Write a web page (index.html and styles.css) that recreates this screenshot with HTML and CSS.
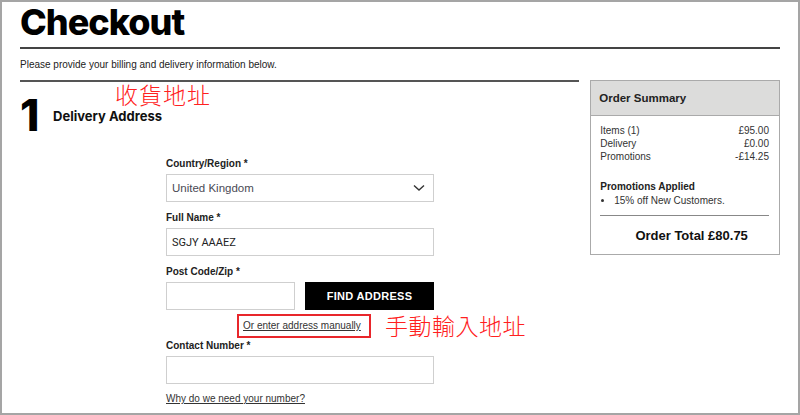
FILE: index.html
```html
<!DOCTYPE html>
<html lang="en">
<head>
  <meta charset="UTF-8">
  <title>Checkout</title>
  <link rel="stylesheet" href="styles.css">
</head>
<body>
  <div class="page">
    <h1>Checkout</h1>
    <p class="intro">Please provide your billing and delivery information below.</p>

    <div class="main">
      <div class="left">
        <div class="step">
          <span class="step-num">1</span>
          <span class="step-title">Delivery Address</span>
          <span class="note note-step">收貨地址</span>
        </div>

        <form class="address-form">
          <label>Country/Region *</label>
          <div class="select">
            <span>United Kingdom</span>
            <svg width="12" height="8" viewBox="0 0 12 8"><path d="M1 1.5 L6 6 L11 1.5" fill="none" stroke="#333" stroke-width="1.4"/></svg>
          </div>

          <label>Full Name *</label>
          <div class="input name-input">SGJY AAAEZ</div>

          <label>Post Code/Zip *</label>
          <div class="postcode-row">
            <div class="input postcode"></div>
            <button type="button" class="find-btn">FIND ADDRESS</button>
          </div>
          <div class="manual-row">
            <a href="#" class="manual-link">Or enter address manually</a>
            <span class="note note-manual">手動輸入地址</span>
          </div>

          <label>Contact Number *</label>
          <div class="input"></div>
          <a href="#" class="why-link">Why do we need your number?</a>
        </form>
      </div>

      <aside class="summary">
        <div class="summary-head">Order Summary</div>
        <div class="summary-body">
          <div class="row"><span>Items (1)</span><span>£95.00</span></div>
          <div class="row"><span>Delivery</span><span>£0.00</span></div>
          <div class="row"><span>Promotions</span><span>-£14.25</span></div>
          <div class="promo-title">Promotions Applied</div>
          <ul class="promo-list">
            <li>15% off New Customers.</li>
          </ul>
          <div class="total">Order Total £80.75</div>
        </div>
      </aside>
    </div>
  </div>
</body>
</html>
```

FILE: styles.css
```css
html, body {
  margin: 0;
  height: 415px;
}
body {
  font-family: 'Liberation Sans', Arial, sans-serif;
  color: #222;
  background: white;
  border: 2px solid #a5a5a5;
  box-sizing: border-box;
  overflow: hidden;
}
.page {
  padding: 0 18px;
}
h1 {
  font-family: 'Inter', sans-serif;
  font-weight: 800;
  font-size: 36px;
  line-height: 40px;
  margin: 0;
  padding-bottom: 5px;
  border-bottom: 2px solid #444;
  color: #000;
  letter-spacing: -1px;
}
.intro {
  font-size: 10px;
  line-height: 12px;
  margin: 10px 0 9px;
  color: #222;
}
.main {
  display: flex;
  gap: 11px;
}
.left {
  width: 560px;
  border-top: 2px solid #555;
}
.step {
  position: relative;
  display: flex;
  align-items: center;
  height: 62px;
}
.step-num {
  font-family: 'Inter', sans-serif;
  font-weight: 800;
  font-size: 44px;
  color: #000;
  width: 33px;
  margin-top: 4px;
}
.step-title {
  font-family: 'Inter', sans-serif;
  font-weight: 700;
  font-size: 13px;
  color: #111;
  margin-top: 6px;
}
.note {
  position: absolute;
  font-family: 'Noto Sans CJK TC', sans-serif;
  font-weight: 300;
  color: #ff2020;
  font-size: 23px;
  line-height: 26px;
  letter-spacing: 1px;
  white-space: nowrap;
}
.note-step {
  left: 95px;
  top: -1px;
}
.address-form {
  margin-left: 146px;
  width: 268px;
  font-size: 10px;
}
.address-form label {
  display: block;
  font-weight: bold;
  font-size: 10px;
  line-height: 12px;
  margin: 10px 0 4px;
}
.address-form label:first-child {
  margin-top: 14px;
}
.select, .input {
  box-sizing: border-box;
  height: 28px;
  border: 1px solid #cfcfcf;
  background: white;
  display: flex;
  align-items: center;
  padding: 0 5px;
  font-size: 11.5px;
}
.select {
  justify-content: space-between;
  color: #4a4a55;
  padding-right: 8px;
}
.name-input {
  font-family: 'Roboto', sans-serif;
  font-size: 11px;
  color: #222;
}
.postcode-row {
  display: flex;
  justify-content: space-between;
  margin-top: 1px;
}
.postcode {
  width: 129px;
}
.find-btn {
  width: 129px;
  height: 28px;
  background: #000;
  color: white;
  border: none;
  font-family: 'Liberation Sans', Arial, sans-serif;
  font-weight: bold;
  font-size: 11px;
  letter-spacing: 0.3px;
}
.manual-row {
  position: relative;
  padding: 4px 0 0 71px;
  height: 30px;
  box-sizing: border-box;
}
.manual-link {
  display: inline-block;
  border: 2px solid #e8262b;
  padding: 4px 8px 4px 4px;
  line-height: 12px;
  color: #333;
  font-size: 10px;
}
.note-manual {
  left: 219px;
  top: 2px;
  letter-spacing: 0.5px;
}
.address-form .manual-row + label {
  margin-top: 0;
}
.why-link {
  display: inline-block;
  margin-top: 9px;
  color: #333;
  font-size: 10px;
}
.summary {
  width: 190px;
  height: 175px;
  box-sizing: border-box;
  border: 1px solid #aaa;
  align-self: flex-start;
}
.summary-head {
  background: #dcdcdb;
  border-bottom: 1px solid #aaa;
  height: 34px;
  line-height: 35px;
  padding-left: 8px;
  font-weight: bold;
  font-size: 11.5px;
  color: #222;
}
.summary-body {
  padding: 8px 10px 0 9px;
  font-size: 10px;
  color: #333;
}
.row {
  display: flex;
  justify-content: space-between;
  line-height: 13px;
}
.promo-title {
  margin-top: 17px;
  font-weight: bold;
  color: #222;
  line-height: 13px;
}
.promo-list {
  margin: 1px 0 0;
  padding-left: 14px;
  padding-bottom: 8px;
  border-bottom: 1px solid #888;
  line-height: 13px;
}
.total {
  text-align: center;
  font-weight: bold;
  font-size: 13px;
  color: #111;
  margin-top: 12px;
  padding-left: 14px;
}
```
